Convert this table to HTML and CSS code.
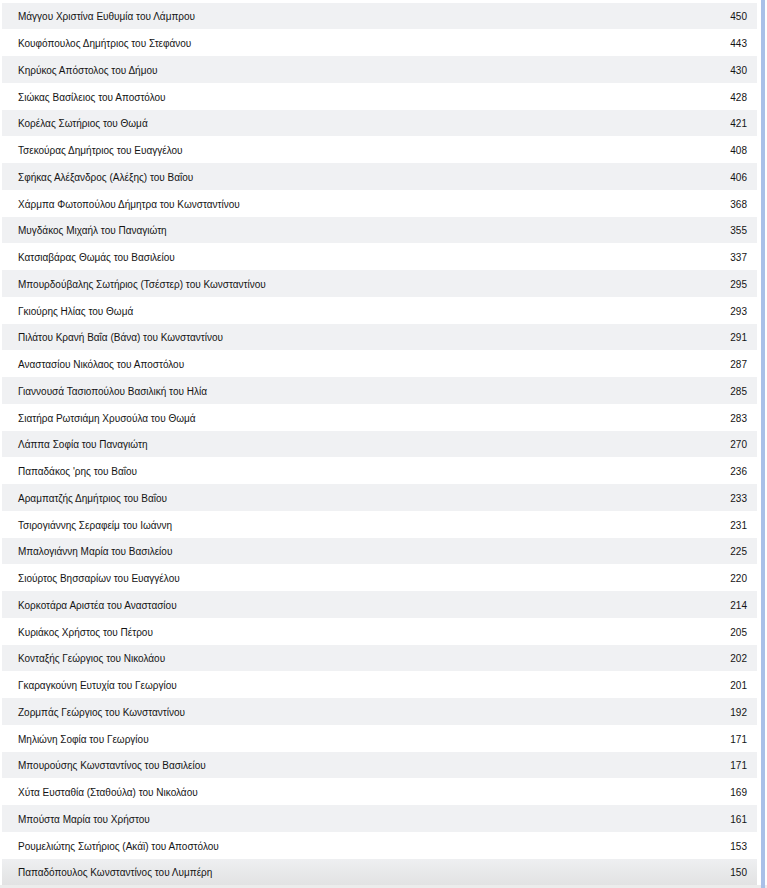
FILE: index.html
```html
<!DOCTYPE html>
<html lang="el">
<head>
<meta charset="utf-8">
<link rel="stylesheet" href="styles.css">
</head>
<body>
<div class="page">
  <div class="list">
    <div class="row"><span class="name">Μάγγου Χριστίνα Ευθυμία του Λάμπρου</span><span class="num">450</span></div>
    <div class="row"><span class="name">Κουφόπουλος Δημήτριος του Στεφάνου</span><span class="num">443</span></div>
    <div class="row"><span class="name">Κηρύκος Απόστολος του Δήμου</span><span class="num">430</span></div>
    <div class="row"><span class="name">Σιώκας Βασίλειος του Αποστόλου</span><span class="num">428</span></div>
    <div class="row"><span class="name">Κορέλας Σωτήριος του Θωμά</span><span class="num">421</span></div>
    <div class="row"><span class="name">Τσεκούρας Δημήτριος του Ευαγγέλου</span><span class="num">408</span></div>
    <div class="row"><span class="name">Σφήκας Αλέξανδρος (Αλέξης) του Βαΐου</span><span class="num">406</span></div>
    <div class="row"><span class="name">Χάρμπα Φωτοπούλου Δήμητρα του Κωνσταντίνου</span><span class="num">368</span></div>
    <div class="row"><span class="name">Μυγδάκος Μιχαήλ του Παναγιώτη</span><span class="num">355</span></div>
    <div class="row"><span class="name">Κατσιαβάρας Θωμάς του Βασιλείου</span><span class="num">337</span></div>
    <div class="row"><span class="name">Μπουρδούβαλης Σωτήριος (Τσέστερ) του Κωνσταντίνου</span><span class="num">295</span></div>
    <div class="row"><span class="name">Γκιούρης Ηλίας του Θωμά</span><span class="num">293</span></div>
    <div class="row"><span class="name">Πιλάτου Κρανή Βαΐα (Βάνα) του Κωνσταντίνου</span><span class="num">291</span></div>
    <div class="row"><span class="name">Αναστασίου Νικόλαος του Αποστόλου</span><span class="num">287</span></div>
    <div class="row"><span class="name">Γιαννουσά Τασιοπούλου Βασιλική του Ηλία</span><span class="num">285</span></div>
    <div class="row"><span class="name">Σιατήρα Ρωτσιάμη Χρυσούλα του Θωμά</span><span class="num">283</span></div>
    <div class="row"><span class="name">Λάππα Σοφία του Παναγιώτη</span><span class="num">270</span></div>
    <div class="row"><span class="name">Παπαδάκος 'ρης του Βαΐου</span><span class="num">236</span></div>
    <div class="row"><span class="name">Αραμπατζής Δημήτριος του Βαΐου</span><span class="num">233</span></div>
    <div class="row"><span class="name">Τσιρογιάννης Σεραφείμ του Ιωάννη</span><span class="num">231</span></div>
    <div class="row"><span class="name">Μπαλογιάννη Μαρία του Βασιλείου</span><span class="num">225</span></div>
    <div class="row"><span class="name">Σιούρτος Βησσαρίων του Ευαγγέλου</span><span class="num">220</span></div>
    <div class="row"><span class="name">Κορκοτάρα Αριστέα του Αναστασίου</span><span class="num">214</span></div>
    <div class="row"><span class="name">Κυριάκος Χρήστος του Πέτρου</span><span class="num">205</span></div>
    <div class="row"><span class="name">Κονταξής Γεώργιος του Νικολάου</span><span class="num">202</span></div>
    <div class="row"><span class="name">Γκαραγκούνη Ευτυχία του Γεωργίου</span><span class="num">201</span></div>
    <div class="row"><span class="name">Ζορμπάς Γεώργιος του Κωνσταντίνου</span><span class="num">192</span></div>
    <div class="row"><span class="name">Μηλιώνη Σοφία του Γεωργίου</span><span class="num">171</span></div>
    <div class="row"><span class="name">Μπουρούσης Κωνσταντίνος του Βασιλείου</span><span class="num">171</span></div>
    <div class="row"><span class="name">Χύτα Ευσταθία (Σταθούλα) του Νικολάου</span><span class="num">169</span></div>
    <div class="row"><span class="name">Μπούστα Μαρία του Χρήστου</span><span class="num">161</span></div>
    <div class="row"><span class="name">Ρουμελιώτης Σωτήριος (Ακάϊ) του Αποστόλου</span><span class="num">153</span></div>
    <div class="row last"><span class="name">Παπαδόπουλος Κωνσταντίνος του Λυμπέρη</span><span class="num">150</span></div>
  </div>
  <div class="rail"></div>
</div>
</body>
</html>
```
FILE: styles.css
```css
html, body {
  margin: 0;
  padding: 0;
  background: #ffffff;
}
body {
  font-family: "Liberation Sans", Arial, sans-serif;
  font-size: 10px;
  color: #141414;
  height: 888px;
  overflow: hidden;
}
.page {
  display: flex;
  height: 888px;
  background: linear-gradient(to bottom, #ffffff 0, #ffffff 885px, #ececec 885px);
}
.list {
  flex: 0 0 755px;
  padding: 2.6px 0 0 2px;
}
.rail {
  flex: 0 0 4px;
  margin-left: 4px;
  background: #a9c0e8;
}
.row {
  display: flex;
  align-items: center;
  justify-content: space-between;
  box-sizing: border-box;
  height: 26.75px;
  padding: 2px 10px 0 16px;
  background: #ffffff;
}
.row:nth-child(odd) {
  background: #f0f1f3;
}
.row.last {
  background: linear-gradient(to bottom, #eeeff1, #e2e2e3);
}
.name {
  white-space: nowrap;
}
.num {
  white-space: nowrap;
}
```
